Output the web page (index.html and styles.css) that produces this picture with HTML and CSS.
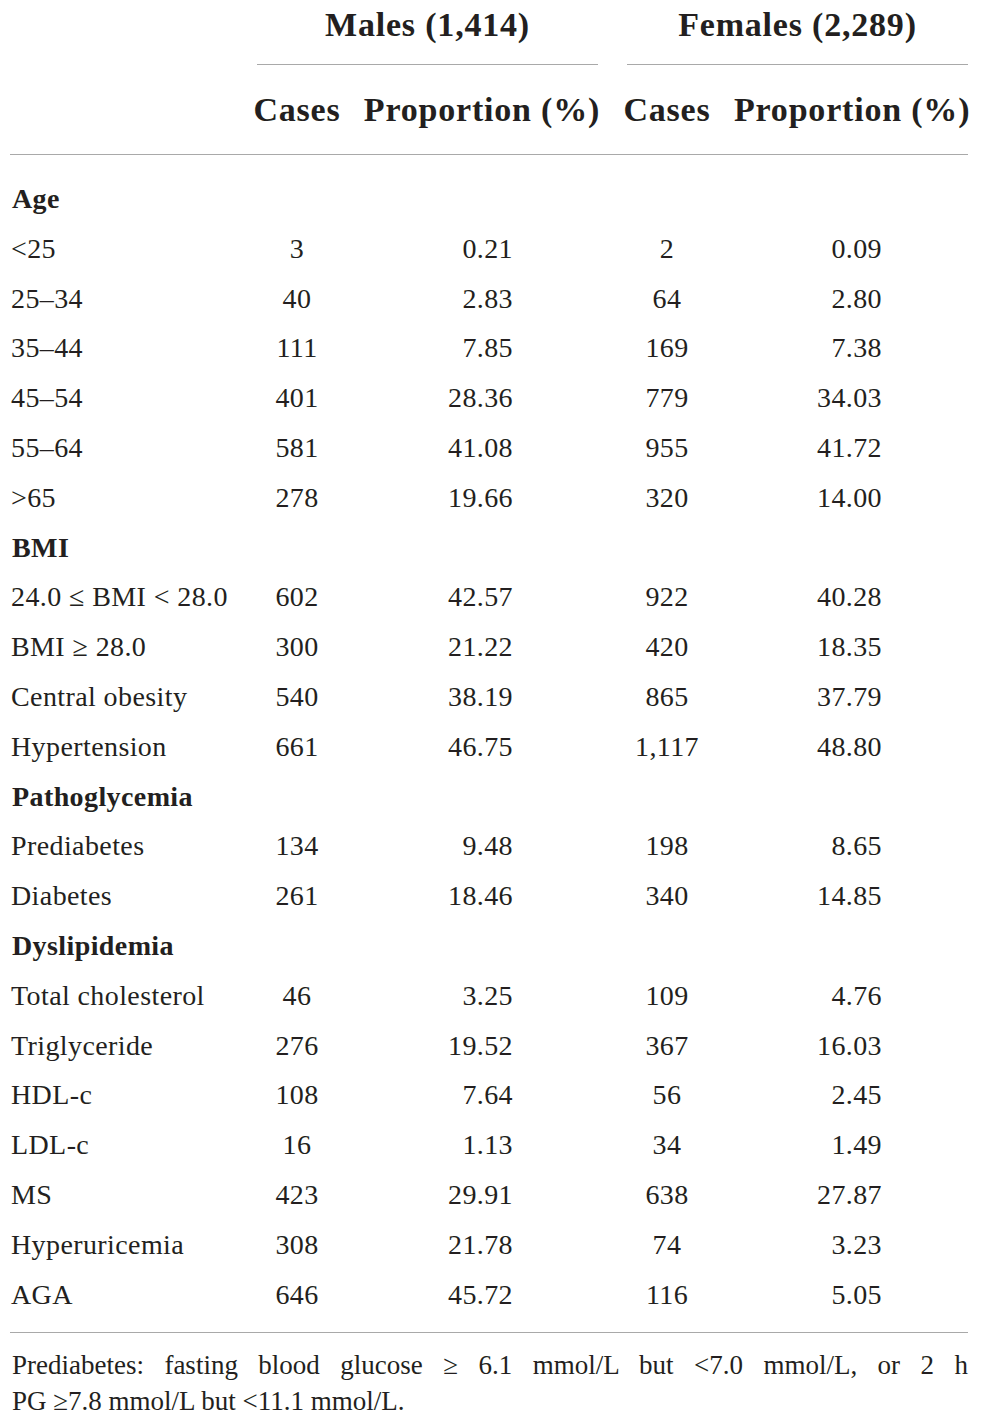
FILE: index.html
```html
<!DOCTYPE html>
<html lang="en">
<head>
<meta charset="utf-8">
<title>Table</title>
<link rel="stylesheet" href="styles.css">
</head>
<body>
<div class="page">
  <div class="tbl">
    <div class="gh-blank"></div>
    <div class="gh gh-m"><span>Males (1,414)</span></div>
    <div class="gh gh-f"><span>Females (2,289)</span></div>

    <div class="sh-blank"></div>
    <div class="sh">Cases</div>
    <div class="sh">Proportion (%)</div>
    <div class="sh">Cases</div>
    <div class="sh sh-last">Proportion (%)</div>
    <div class="rule rule-head"></div>

    <div class="sec">Age</div>
    <div class="lab">&lt;25</div><div class="c">3</div><div class="p pm">0.21</div><div class="c">2</div><div class="p pf">0.09</div>
    <div class="lab">25–34</div><div class="c">40</div><div class="p pm">2.83</div><div class="c">64</div><div class="p pf">2.80</div>
    <div class="lab">35–44</div><div class="c">111</div><div class="p pm">7.85</div><div class="c">169</div><div class="p pf">7.38</div>
    <div class="lab">45–54</div><div class="c">401</div><div class="p pm">28.36</div><div class="c">779</div><div class="p pf">34.03</div>
    <div class="lab">55–64</div><div class="c">581</div><div class="p pm">41.08</div><div class="c">955</div><div class="p pf">41.72</div>
    <div class="lab">&gt;65</div><div class="c">278</div><div class="p pm">19.66</div><div class="c">320</div><div class="p pf">14.00</div>

    <div class="sec">BMI</div>
    <div class="lab">24.0 &le; BMI &lt; 28.0</div><div class="c">602</div><div class="p pm">42.57</div><div class="c">922</div><div class="p pf">40.28</div>
    <div class="lab">BMI &ge; 28.0</div><div class="c">300</div><div class="p pm">21.22</div><div class="c">420</div><div class="p pf">18.35</div>
    <div class="lab">Central obesity</div><div class="c">540</div><div class="p pm">38.19</div><div class="c">865</div><div class="p pf">37.79</div>
    <div class="lab">Hypertension</div><div class="c">661</div><div class="p pm">46.75</div><div class="c">1,117</div><div class="p pf">48.80</div>

    <div class="sec">Pathoglycemia</div>
    <div class="lab">Prediabetes</div><div class="c">134</div><div class="p pm">9.48</div><div class="c">198</div><div class="p pf">8.65</div>
    <div class="lab">Diabetes</div><div class="c">261</div><div class="p pm">18.46</div><div class="c">340</div><div class="p pf">14.85</div>

    <div class="sec">Dyslipidemia</div>
    <div class="lab">Total cholesterol</div><div class="c">46</div><div class="p pm">3.25</div><div class="c">109</div><div class="p pf">4.76</div>
    <div class="lab">Triglyceride</div><div class="c">276</div><div class="p pm">19.52</div><div class="c">367</div><div class="p pf">16.03</div>
    <div class="lab">HDL-c</div><div class="c">108</div><div class="p pm">7.64</div><div class="c">56</div><div class="p pf">2.45</div>
    <div class="lab">LDL-c</div><div class="c">16</div><div class="p pm">1.13</div><div class="c">34</div><div class="p pf">1.49</div>
    <div class="lab">MS</div><div class="c">423</div><div class="p pm">29.91</div><div class="c">638</div><div class="p pf">27.87</div>
    <div class="lab">Hyperuricemia</div><div class="c">308</div><div class="p pm">21.78</div><div class="c">74</div><div class="p pf">3.23</div>
    <div class="lab">AGA</div><div class="c">646</div><div class="p pm">45.72</div><div class="c">116</div><div class="p pf">5.05</div>

    <div class="rule rule-foot"></div>
  </div>
  <div class="note">
    <div class="note-l1">Prediabetes: fasting blood glucose &ge; 6.1 mmol/L but &lt;7.0 mmol/L, or 2 h</div>
    <div class="note-l2">PG &ge;7.8 mmol/L but &lt;11.1 mmol/L.</div>
  </div>
</div>
</body>
</html>
```

FILE: styles.css
```css
html, body {
  margin: 0;
  padding: 0;
  background: #ffffff;
}

body {
  font-family: "Liberation Serif", "Times New Roman", serif;
  color: #231f20;
  overflow-x: hidden;
}

.page {
  width: 958px;
  padding-left: 10px;
}

.tbl {
  display: grid;
  grid-template-columns: 238px 98px 272px 98px 252px;
  grid-auto-rows: auto;
  font-size: 28px;
  letter-spacing: 0.4px;
}

.gh-blank {
  grid-column: 1;
}

.gh {
  grid-column: span 2;
  font-weight: bold;
  font-size: 34px;
  letter-spacing: 0.8px;
  line-height: 40px;
  padding-top: 5px;
  padding-bottom: 19px;
  text-align: center;
  white-space: nowrap;
  border-bottom: 1.5px solid #a9a9a9;
}

.gh-m {
  margin-left: 9px;
  margin-right: 20px;
}

.gh-f {
  margin-left: 9px;
  margin-right: 0;
}

.sh-blank {
  grid-column: 1;
}

.sh {
  font-weight: bold;
  font-size: 34px;
  letter-spacing: 0.8px;
  line-height: 40px;
  padding-top: 25px;
  padding-bottom: 24px;
  text-align: center;
  white-space: nowrap;
}

.sh-last {
  padding-left: 18px;
}

.rule {
  grid-column: 1 / -1;
  height: 0;
  border-top: 1.5px solid #a9a9a9;
}

.rule-head {
  margin-bottom: 19px;
}

.rule-foot {
  margin-top: 13px;
}

.sec, .lab, .c, .p {
  height: 49.8px;
  line-height: 49.8px;
  white-space: nowrap;
}

.sec {
  grid-column: 1 / -1;
  font-weight: bold;
  padding-left: 2px;
}

.lab {
  grid-column: 1;
  padding-left: 1px;
}

.c {
  text-align: center;
}

.p {
  text-align: right;
}

.pm {
  padding-right: 105px;
}

.pf {
  padding-right: 86px;
}

.note {
  margin-top: 14px;
  padding-left: 2px;
  font-size: 27px;
  line-height: 36px;
}

.note-l1 {
  text-align: justify;
  text-align-last: justify;
}
```
